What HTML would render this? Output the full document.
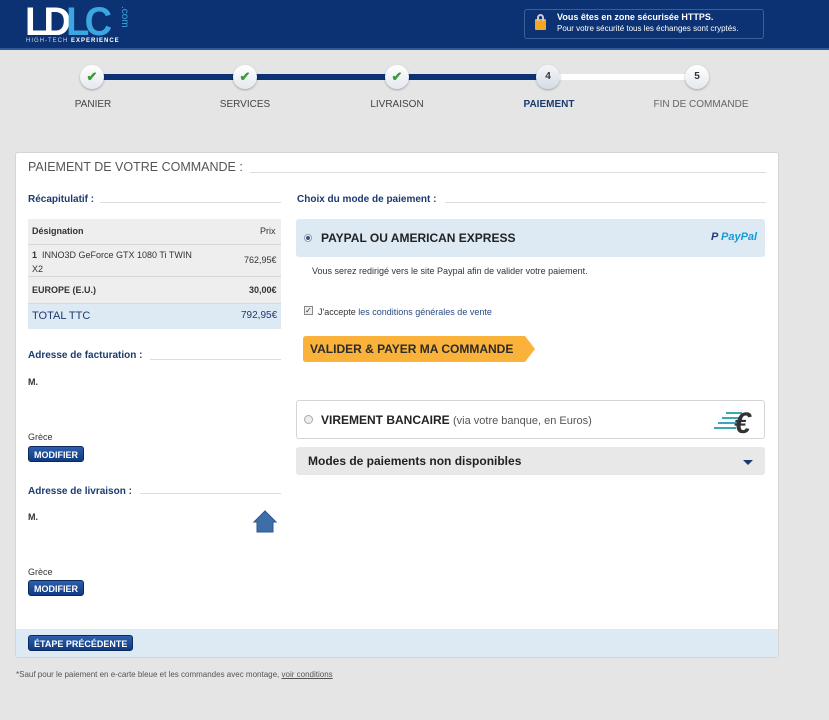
<!DOCTYPE html>
<html><head><meta charset="utf-8"><style>
*{margin:0;padding:0;box-sizing:border-box}
body{width:829px;height:720px;background:#e5e5e5;font-family:"Liberation Sans",sans-serif;position:relative;overflow:hidden;color:#333}
.a{position:absolute}
.hdr{left:0;top:0;width:829px;height:50px;background:#0c3273;border-bottom:2px solid #2d5a9a}
.circ{width:24px;height:24px;border-radius:50%;background:linear-gradient(#fff,#e4e8ee);box-shadow:0 1px 2px rgba(0,0,0,.3);text-align:center;font-size:10px;font-weight:bold;line-height:24px;color:#333}
.lbl{font-size:10px;color:#444;top:99px;width:160px;text-align:center}
.h3{font-size:10px;font-weight:bold;color:#1b3a70;background:#fff;padding-right:4px}
.hl{height:1px;background:#ddd}
.btn{background:linear-gradient(#2d5fad,#0f3a82);color:#fff;font-size:9px;font-weight:bold;border-radius:3px;padding:0 5px;height:16px;line-height:16px;border:1px solid #0a2a5e}
.sm{font-size:9px}
</style></head><body>
<div class="a hdr"></div>
<div class="a" style="left:25px;top:2px;font:bold 40px 'Liberation Sans',sans-serif;letter-spacing:-5px;color:#fff;line-height:40px;transform:scaleX(0.95);transform-origin:left">LD<span style="color:#3ba7e0">LC</span></div>
<div class="a" style="left:130px;top:6px;font-size:10px;color:#3ba7e0;transform:rotate(90deg);transform-origin:left top">.com</div>
<div class="a" style="left:26px;top:38px;font-size:6px;color:#cfd8e6;letter-spacing:1px">HIGH-TECH <b style="color:#fff">EXPERIENCE</b></div>
<div class="a" style="left:524px;top:9px;width:240px;height:30px;border:1px solid #3a5f99;border-radius:3px"></div>
<div class="a" style="left:535px;top:19px;width:11px;height:11px;background:#f5a623;border-radius:1px"></div>
<div class="a" style="left:537px;top:14px;width:7px;height:7px;border:2px solid #ccc;border-bottom:none;border-radius:4px 4px 0 0"></div>
<div class="a" style="left:557px;top:12px;font-size:9px;font-weight:bold;color:#fff">Vous êtes en zone sécurisée HTTPS.</div>
<div class="a" style="left:557px;top:24px;font-size:8px;color:#fff">Pour votre sécurité tous les échanges sont cryptés.</div>

<div class="a" style="left:92px;top:74px;width:456px;height:6px;background:#0c3273"></div>
<div class="a" style="left:548px;top:74px;width:150px;height:6px;background:#fff"></div>
<div class="a circ" style="left:80px;top:65px;color:#3a9b3a;font-size:13px">✔</div>
<div class="a circ" style="left:233px;top:65px;color:#3a9b3a;font-size:13px">✔</div>
<div class="a circ" style="left:385px;top:65px;color:#3a9b3a;font-size:13px">✔</div>
<div class="a circ" style="left:536px;top:65px;background:linear-gradient(#f4f6f9,#d5dce6)">4</div>
<div class="a circ" style="left:685px;top:65px">5</div>
<div class="a lbl" style="left:13px">PANIER</div>
<div class="a lbl" style="left:165px">SERVICES</div>
<div class="a lbl" style="left:317px">LIVRAISON</div>
<div class="a lbl" style="left:469px;font-weight:bold;color:#1b3a70">PAIEMENT</div>
<div class="a lbl" style="left:621px;color:#666">FIN DE COMMANDE</div>

<div class="a" style="left:15px;top:152px;width:764px;height:506px;background:#fff;border:1px solid #d5d5d5;border-radius:3px"></div>
<div class="a hl" style="left:250px;top:172px;width:516px"></div>
<div class="a" style="left:28px;top:160px;font-size:12.5px;color:#555;background:#fff;padding-right:6px">PAIEMENT DE VOTRE COMMANDE :</div>

<div class="a hl" style="left:100px;top:202px;width:181px"></div>
<div class="a h3" style="left:28px;top:194px">Récapitulatif :</div>
<div class="a" style="left:28px;top:219px;width:253px;height:110px;background:#eee"></div>
<div class="a" style="left:28px;top:244px;width:253px;height:1px;background:#d6d6d6"></div>
<div class="a" style="left:28px;top:276px;width:253px;height:1px;background:#d6d6d6"></div>
<div class="a" style="left:28px;top:303px;width:253px;height:26px;background:#dde9f3;border-top:1px solid #cdd"></div>
<div class="a sm" style="left:32px;top:226px;font-weight:bold">Désignation</div>
<div class="a sm" style="left:260px;top:226px">Prix</div>
<div class="a" style="left:32px;top:248px;font-size:9px;line-height:14px;width:170px"><b>1</b>&nbsp; INNO3D GeForce GTX 1080 Ti TWIN X2</div>
<div class="a" style="left:244px;top:255px;font-size:9px">762,95€</div>
<div class="a" style="left:32px;top:285px;font-size:9px;font-weight:bold">EUROPE (E.U.)</div>
<div class="a" style="left:249px;top:285px;font-size:9px;font-weight:bold">30,00€</div>
<div class="a" style="left:32px;top:310px;font-size:11px;color:#1b3a70">TOTAL TTC</div>
<div class="a" style="left:241px;top:310px;font-size:10px;color:#1b3a70">792,95€</div>

<div class="a hl" style="left:150px;top:359px;width:131px"></div>
<div class="a h3" style="left:28px;top:350px">Adresse de facturation :</div>
<div class="a" style="left:28px;top:377px;font-size:9px;font-weight:bold">M.</div>
<div class="a" style="left:28px;top:432px;font-size:9px">Grèce</div>
<div class="a btn" style="left:28px;top:446px">MODIFIER</div>

<div class="a hl" style="left:140px;top:493px;width:141px"></div>
<div class="a h3" style="left:28px;top:486px">Adresse de livraison :</div>
<div class="a" style="left:28px;top:512px;font-size:9px;font-weight:bold">M.</div>
<svg class="a" style="left:253px;top:510px" width="24" height="23"><path d="M12 1L1 12h3v10h16V12h3z" fill="#3e6ea8" stroke="#2a5590"/></svg>
<div class="a" style="left:28px;top:567px;font-size:9px">Grèce</div>
<div class="a btn" style="left:28px;top:580px">MODIFIER</div>

<div class="a hl" style="left:445px;top:202px;width:321px"></div>
<div class="a h3" style="left:297px;top:194px">Choix du mode de paiement :</div>
<div class="a" style="left:296px;top:219px;width:469px;height:38px;background:#dde9f3;border-radius:3px"></div>
<div class="a" style="left:304px;top:234px;width:8px;height:8px;border-radius:50%;background:#fff;border:1px solid #999"><div style="margin:1px;width:4px;height:4px;border-radius:50%;background:#2a5590"></div></div>
<div class="a" style="left:321px;top:231px;font-size:12px;font-weight:bold;color:#222">PAYPAL OU AMERICAN EXPRESS</div>
<div class="a" style="left:711px;top:231px;font:bold italic 11px 'Liberation Sans',sans-serif;color:#253b80">P <span style="color:#179bd7">PayPal</span></div>
<div class="a" style="left:312px;top:266px;font-size:9px">Vous serez redirigé vers le site Paypal afin de valider votre paiement.</div>
<div class="a" style="left:304px;top:306px;width:9px;height:9px;border:1px solid #888;background:#eee;font-size:8px;line-height:8px">✓</div>
<div class="a" style="left:318px;top:307px;font-size:9px">J'accepte <span style="color:#2a4a80">les conditions générales de vente</span></div>
<svg class="a" style="left:303px;top:336px" width="233" height="27"><path d="M3 0H222L232 13L222 26H3Q0 26 0 23V3Q0 0 3 0Z" fill="#fbb23a"/></svg>
<div class="a" style="left:310px;top:342px;font-size:12px;font-weight:bold;color:#2b2b2b">VALIDER &amp; PAYER MA COMMANDE</div>

<div class="a" style="left:296px;top:400px;width:469px;height:39px;border:1px solid #d5d5d5;border-radius:3px"></div>
<div class="a" style="left:304px;top:415px;width:9px;height:9px;border-radius:50%;border:1px solid #aaa;background:#eee"></div>
<div class="a" style="left:321px;top:413px;font-size:12px;font-weight:bold;color:#222">VIREMENT BANCAIRE <span style="font-weight:normal;font-size:11px;color:#555">(via votre banque, en Euros)</span></div>
<svg class="a" style="left:712px;top:405px" width="50" height="30"><g stroke="#3ba7b5" stroke-width="2"><line x1="2" y1="23" x2="24" y2="23"/><line x1="6" y1="18" x2="26" y2="18"/><line x1="10" y1="13" x2="28" y2="13"/><line x1="14" y1="8" x2="30" y2="8"/></g><text x="22" y="28" font-size="30" font-weight="bold" font-style="italic" fill="#333" font-family="Liberation Sans">€</text></svg>
<div class="a" style="left:296px;top:447px;width:469px;height:28px;background:#e8e8e8;border-radius:3px"></div>
<div class="a" style="left:308px;top:454px;font-size:12px;font-weight:bold;color:#222">Modes de paiements non disponibles</div>
<div class="a" style="left:743px;top:460px;width:0;height:0;border-left:5px solid transparent;border-right:5px solid transparent;border-top:5px solid #1b3a70"></div>

<div class="a" style="left:16px;top:629px;width:762px;height:28px;background:#dde9f3"></div>
<div class="a btn" style="left:28px;top:635px">ÉTAPE PRÉCÉDENTE</div>
<div class="a" style="left:16px;top:670px;font-size:8px;color:#555">*Sauf pour le paiement en e-carte bleue et les commandes avec montage, <u>voir conditions</u></div>
</body></html>
